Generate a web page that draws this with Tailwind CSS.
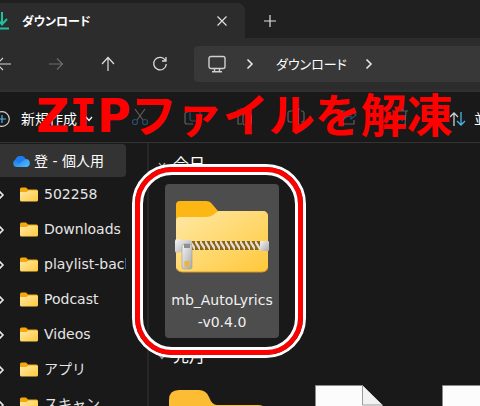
<!DOCTYPE html>
<html lang="ja">
<head>
  <meta charset="UTF-8">
  <meta name="viewport" content="width=device-width, initial-scale=1.0">
  <title>ダウンロード</title>
  <script src="https://cdn.jsdelivr.net/npm/@tailwindcss/browser@4"></script>
</head>
<body class="h-screen flex flex-col overflow-hidden bg-[#191919] text-[#e6e6e6] text-sm font-['DejaVu_Sans','Noto_Sans_CJK_JP',sans-serif]">
  <svg class="absolute w-0 h-0">
    <defs>
      <linearGradient id="front" x1="0" y1="0" x2="1" y2="1">
        <stop offset="0" stop-color="#ffe9a6"/>
        <stop offset="1" stop-color="#ffc83a"/>
      </linearGradient>
      <linearGradient id="cloud" x1="0" y1="0" x2="1" y2="1">
        <stop offset="0" stop-color="#1668d8"/>
        <stop offset="1" stop-color="#4fc3ff"/>
      </linearGradient>
      <linearGradient id="metal" x1="0" y1="0" x2="1" y2="1">
        <stop offset="0" stop-color="#f4f4f4"/>
        <stop offset="1" stop-color="#a8a8a8"/>
      </linearGradient>
      <pattern id="teeth" width="5" height="9" patternUnits="userSpaceOnUse">
        <rect width="5" height="9" fill="#8a6414"/>
        <path d="M0 0l3 5M2.500 4l3 5" stroke="#e4dfd2" stroke-width="2.400"/>
      </pattern>
      <symbol id="folder" viewBox="0 0 18 15">
        <path d="M0 2a1.500 1.500 0 0 1 1.500-1.500H6L8 2.500h8.500A1.500 1.500 0 0 1 18 4v9H0z" fill="#f5a80c"/>
        <path d="M0 5h6.500L8.500 3.500h8A1.500 1.500 0 0 1 18 5v8a1.500 1.500 0 0 1-1.500 1.500h-15A1.500 1.500 0 0 1 0 13z" fill="url(#front)"/>
      </symbol>
      <symbol id="chevron" viewBox="0 0 8 12">
        <path d="M1.500 1.500L6 6l-4.500 4.500" fill="none" stroke="currentColor" stroke-width="1.600"/>
      </symbol>
      <symbol id="down" viewBox="0 0 8 6">
        <path d="M1 1l3 3.500L7 1" fill="none" stroke="currentColor" stroke-width="1.200"/>
      </symbol>
    </defs>
  </svg>

  <!-- タブ -->
  <header class="h-[38px] shrink-0 flex bg-[#202020]">
    <div class="w-[245px] mt-[3px] pr-[15px] flex items-center bg-[#2c2c2c] rounded-tr-lg">
      <svg class="w-4 h-5 -ml-[6px] shrink-0" viewBox="0 0 16 20" fill="none" stroke="#1dc0a0" stroke-width="2">
        <path d="M8 1v12M3 8l5 5.500L13 8M1 17.500h14"/>
      </svg>
      <span class="ml-3 flex-1 text-xs font-bold text-white font-['Noto_Sans_CJK_JP',sans-serif] [font-feature-settings:'palt']">ダウンロード</span>
      <button type="button" aria-label="タブを閉じる" class="w-4 h-5 flex items-center justify-center">
        <svg class="w-[10px] h-[10px]" viewBox="0 0 10 10" stroke="#e0e0e0" stroke-width="1.200"><path d="M.5.5l9 9M9.500.5l-9 9"/></svg>
      </button>
    </div>
    <button type="button" aria-label="新しいタブ" class="w-[50px] pt-1 flex items-center justify-center">
      <svg class="w-3 h-3" viewBox="0 0 12 12" stroke="#e0e0e0" stroke-width="1.200"><path d="M6 0v12M0 6h12"/></svg>
    </button>
  </header>

  <!-- ナビゲーション -->
  <nav class="h-[54px] shrink-0 flex items-center bg-[#2c2c2c] border-b-2 border-[#303030]">
    <div class="flex -ml-[22px] shrink-0">
      <button type="button" aria-label="戻る" class="w-[52px] flex justify-center">
        <svg class="w-4 h-4" viewBox="0 0 16 16" fill="none" stroke="#d8d8d8" stroke-width="1.200"><path d="M15 8H1M7 2L1 8l6 6"/></svg>
      </button>
      <button type="button" aria-label="進む" class="w-[52px] flex justify-center">
        <svg class="w-4 h-4" viewBox="0 0 16 16" fill="none" stroke="#6c6c6c" stroke-width="1.200"><path d="M1 8h13M9 2.500L14.500 8 9 13.500"/></svg>
      </button>
      <button type="button" aria-label="上へ" class="w-[52px] flex justify-center">
        <svg class="w-4 h-4" viewBox="0 0 16 16" fill="none" stroke="#e0e0e0" stroke-width="1.200"><path d="M8 15V2M2 8l6-6.500L14 8"/></svg>
      </button>
      <button type="button" aria-label="更新" class="w-[52px] flex justify-center">
        <svg class="w-4 h-4" viewBox="0 0 16 16" fill="none" stroke="#d8d8d8" stroke-width="1.300"><path d="M13.500 4.500A6.300 6.300 0 1 0 14.300 8M14 1v4h-4"/></svg>
      </button>
    </div>
    <div class="ml-2 h-9 flex-1 flex items-center pl-[14px] bg-[#383838] rounded-l">
      <svg class="w-[18px] h-[18px]" viewBox="0 0 18 18" fill="none" stroke="#d0d0d0" stroke-width="1.400">
        <rect x="1" y="1.500" width="16" height="12" rx="2"/><path d="M6.500 14v2.500M11.500 14v2.500M4 16.700h10"/>
      </svg>
      <svg class="w-2 h-3 ml-5"><use href="#chevron"/></svg>
      <a href="#" class="ml-[22px] text-[13px] text-white font-['Noto_Sans_CJK_JP',sans-serif] [font-feature-settings:'palt']">ダウンロード</a>
      <svg class="w-2 h-3 ml-[18px]"><use href="#chevron"/></svg>
    </div>
  </nav>

  <!-- ツールバー -->
  <div class="relative h-[51px] shrink-0 flex items-center border-b border-[#333] whitespace-nowrap">
    <button type="button" class="-ml-[6px] flex items-center pt-1 text-white">
      <svg class="w-4 h-4" viewBox="0 0 16 16" fill="none" stroke="#d0d0d0" stroke-width="1.200"><circle cx="8" cy="8" r="7.300"/><path d="M8 4v8M4 8h8" stroke="#4cb4ec"/></svg>
      <span class="ml-[11px]">新規作成</span>
      <svg class="w-2 h-[6px] ml-2"><use href="#down"/></svg>
    </button>
    <div class="ml-[17px] w-px h-8 bg-[#303030]"></div>
    <div class="ml-1 flex">
      <button type="button" aria-label="切り取り" class="w-[52px] flex justify-center">
        <svg class="w-[18px] h-[18px]" viewBox="0 0 18 18" fill="none" stroke="#5e5e5e" stroke-width="1.200"><path d="M4 1l8 11M14 1L6 12"/><circle cx="4" cy="14" r="2.500" stroke="#24506c"/><circle cx="14" cy="14" r="2.500" stroke="#24506c"/></svg>
      </button>
      <button type="button" aria-label="コピー" class="w-[52px] flex justify-center">
        <svg class="w-[18px] h-[18px]" viewBox="0 0 18 18" fill="none" stroke="#5e5e5e" stroke-width="1.200"><rect x="7" y="1" width="10" height="12" rx="2" stroke="#24506c"/><path d="M5 4H4a2 2 0 0 0-2 2v8a2 2 0 0 0 2 2h6"/></svg>
      </button>
      <button type="button" aria-label="貼り付け" class="w-[52px] flex justify-center">
        <svg class="w-[18px] h-[18px]" viewBox="0 0 18 18" fill="none" stroke="#5e5e5e" stroke-width="1.200"><path d="M6 2H3v14h4M12 2h2v2M6 1h6v2H6z"/><rect x="8" y="6" width="8" height="11" rx="2"/></svg>
      </button>
      <button type="button" aria-label="名前の変更" class="w-[52px] flex justify-center">
        <svg class="w-[18px] h-[18px]" viewBox="0 0 18 18" fill="none" stroke="#5e5e5e" stroke-width="1.200"><path d="M8 3H3a2 2 0 0 0-2 2v7a2 2 0 0 0 2 2h5M14 3h1a2 2 0 0 1 2 2v7a2 2 0 0 1-2 2h-1"/><path d="M11 1v15M9 1h4M9 16h4" stroke="#24506c"/></svg>
      </button>
      <button type="button" aria-label="共有" class="w-[52px] flex justify-center">
        <svg class="w-[18px] h-[18px]" viewBox="0 0 18 18" fill="none" stroke="#5e5e5e" stroke-width="1.200"><path d="M6 3H3v13h12v-4"/><path d="M5 11q1-5 7-5V2l5 5-5 4V8q-4 0-7 3z" stroke="#24506c"/></svg>
      </button>
      <button type="button" aria-label="削除" class="w-[52px] flex justify-center">
        <svg class="w-[18px] h-[18px]" viewBox="0 0 18 18" fill="none" stroke="#5e5e5e" stroke-width="1.200"><path d="M1 3h16M6 3V1h6v2M3 3l1 14h10l1-14M7 7v6M11 7v6"/></svg>
      </button>
    </div>
    <div class="ml-1 w-px h-8 bg-[#303030]"></div>
    <button type="button" class="ml-5 pt-1 flex items-center text-white">
      <svg class="w-4 h-4" viewBox="0 0 16 16" fill="none" stroke="#d0d0d0" stroke-width="1.300"><path d="M4 15V2M0 6l4-4 4 4"/><path d="M11 1v13M7 10l4 4 4-4" stroke="#4cb4ec"/></svg>
      <span class="ml-2">並べ替え</span>
    </button>
    <p class="absolute left-9 top-0 text-[46px] leading-[48px] font-bold text-[#ff0000]">Z<span class="font-['DejaVu_Sans_Mono',monospace]">I</span>Pファイルを解凍</p>
  </div>

  <div class="flex-1 min-h-0 flex">
    <!-- フォルダーツリー -->
    <aside class="w-[149px] shrink-0 pr-[21px] pt-px border-r-2 border-[#262626] overflow-hidden whitespace-nowrap">
      <a href="#" class="h-[33px] pl-3 flex items-center bg-[#333] rounded-r-sm text-white">
        <svg class="w-[18px] h-3 shrink-0" viewBox="0 0 18 12"><path d="M4 12a4 4 0 0 1-.5-7.500A5.500 5.500 0 0 1 13.500 4 4 4 0 0 1 14 12z" fill="url(#cloud)"/><path d="M3.500 4.500A5.500 5.500 0 0 1 13.500 4L6 9z" fill="#1c7df0"/></svg>
        <span class="ml-1">登 - 個人用</span>
      </a>
      <ul>
        <li class="h-[35px] flex items-center overflow-hidden"><svg class="w-2 h-3 -ml-[3px] mr-[15px] shrink-0"><use href="#chevron"/></svg><svg class="w-[18px] h-[15px] shrink-0"><use href="#folder"/></svg><a href="#" class="ml-[6px] pb-px">502258</a></li>
        <li class="h-[35px] flex items-center overflow-hidden"><svg class="w-2 h-3 -ml-[3px] mr-[15px] shrink-0"><use href="#chevron"/></svg><svg class="w-[18px] h-[15px] shrink-0"><use href="#folder"/></svg><a href="#" class="ml-[6px] pb-px">Downloads</a></li>
        <li class="h-[35px] flex items-center overflow-hidden"><svg class="w-2 h-3 -ml-[3px] mr-[15px] shrink-0"><use href="#chevron"/></svg><svg class="w-[18px] h-[15px] shrink-0"><use href="#folder"/></svg><a href="#" class="ml-[6px] pb-px">playlist-back</a></li>
        <li class="h-[35px] flex items-center overflow-hidden"><svg class="w-2 h-3 -ml-[3px] mr-[15px] shrink-0"><use href="#chevron"/></svg><svg class="w-[18px] h-[15px] shrink-0"><use href="#folder"/></svg><a href="#" class="ml-[6px] pb-px">Podcast</a></li>
        <li class="h-[35px] flex items-center overflow-hidden"><svg class="w-2 h-3 -ml-[3px] mr-[15px] shrink-0"><use href="#chevron"/></svg><svg class="w-[18px] h-[15px] shrink-0"><use href="#folder"/></svg><a href="#" class="ml-[6px] pb-px">Videos</a></li>
        <li class="h-[35px] flex items-center overflow-hidden"><svg class="w-2 h-3 -ml-[3px] mr-[15px] shrink-0"><use href="#chevron"/></svg><svg class="w-[18px] h-[15px] shrink-0"><use href="#folder"/></svg><a href="#" class="ml-[6px] pb-px">アプリ</a></li>
        <li class="h-[35px] flex items-center overflow-hidden"><svg class="w-2 h-3 -ml-[3px] mr-[15px] shrink-0"><use href="#chevron"/></svg><svg class="w-[18px] h-[15px] shrink-0"><use href="#folder"/></svg><a href="#" class="ml-[6px] pb-px">スキャン</a></li>
      </ul>
    </aside>

    <!-- ファイル一覧 -->
    <main class="flex-1 min-w-0 pl-4 pt-[10px]">
      <h2 class="-ml-[7px] h-6 flex items-center gap-[7px] text-base text-white">
        <svg class="w-2 h-[6px] text-[#a0a0a0]"><use href="#down"/></svg>今日
      </h2>
      <div class="relative mt-[7px] w-[114px] h-[154px] pt-4 bg-[#4d4d4d] rounded-sm">
        <svg class="w-[94px] h-[73px] mx-auto" viewBox="0 0 94 73">
          <path d="M1 5a4 4 0 0 1 4-4h26q4 0 6 3l6 7h45a5 5 0 0 1 5 5v40H1z" fill="#fcb714"/>
          <path d="M1 21a4 4 0 0 1 4-4h26q4 0 7-2l4-3q1-1 3-1h43a5 5 0 0 1 5 5v51a5 5 0 0 1-5 5H6a5 5 0 0 1-5-5z" fill="url(#front)"/>
          <path d="M2 69q2 3 5 3h80q4 0 5-3" fill="none" stroke="#d99a1c"/>
          <svg x="15" y="41" width="72" height="9"><rect width="72" height="9" fill="url(#teeth)"/></svg>
          <rect x="85" y="41" width="9" height="10" rx="1" fill="url(#metal)"/>
          <path d="M0 41q0-2 2-2l7 1h5q3 0 3 3v6q0 2-3 2H9l-7 2q-2 0-2-2z" fill="url(#metal)"/>
          <path d="M7 47q0-3 3-3h5q2 0 2 3v20q0 2-2 2H9q-2 0-2-2z" fill="url(#metal)" stroke="#9a9a9a" stroke-width=".6"/>
          <rect x="9" y="44" width="6" height="4" fill="#8e8e8e"/>
          <rect x="9.500" y="61" width="5" height="6" rx="1" fill="#e6b545"/>
        </svg>
        <p class="mt-4 text-center leading-[22px] text-[#f0f0f0]">mb_AutoLyrics<br>-v0.4.0</p>
        <!-- 強調の枠 -->
        <div class="absolute -left-[33px] -right-[27px] -top-5 -bottom-5 rounded-[40px] border-3 border-white">
          <div class="h-full rounded-[37px] border-5 border-[#ff0000]">
            <div class="h-full rounded-[32px] border-3 border-white"></div>
          </div>
        </div>
      </div>
      <h2 class="-ml-[7px] mt-[7px] h-6 flex items-center gap-[7px] text-base text-white">
        <svg class="w-2 h-[6px] text-[#a0a0a0]"><use href="#down"/></svg>先月
      </h2>
      <div class="mt-4 flex gap-[13px]">
        <div class="w-[114px] shrink-0 pt-1 pl-1">
          <svg class="w-[98px] h-[80px]" viewBox="0 0 98 80"><path d="M0 11Q0 1 10 1h20q7 0 10 7 3 8 8 8h41q9 0 9 9v55H0z" fill="#fcbc34"/></svg>
        </div>
        <div class="w-[114px] shrink-0">
          <svg class="w-[68px] h-[80px] mx-auto" viewBox="0 0 68 80"><path d="M.5.5h47l20 20V80H.5z" fill="#fcfcfc" stroke="#8a8a8a"/><path d="M47.500.5v19.500h20" fill="#f2f2f2" stroke="#9a9a9a"/></svg>
        </div>
        <div class="w-[114px] shrink-0">
          <svg class="w-[68px] h-[80px] mx-auto" viewBox="0 0 68 80"><path d="M.5.5h47l20 20V80H.5z" fill="#fcfcfc" stroke="#8a8a8a"/><path d="M47.500.5v19.500h20" fill="#f2f2f2" stroke="#9a9a9a"/></svg>
        </div>
      </div>
    </main>
  </div>
</body>
</html>
